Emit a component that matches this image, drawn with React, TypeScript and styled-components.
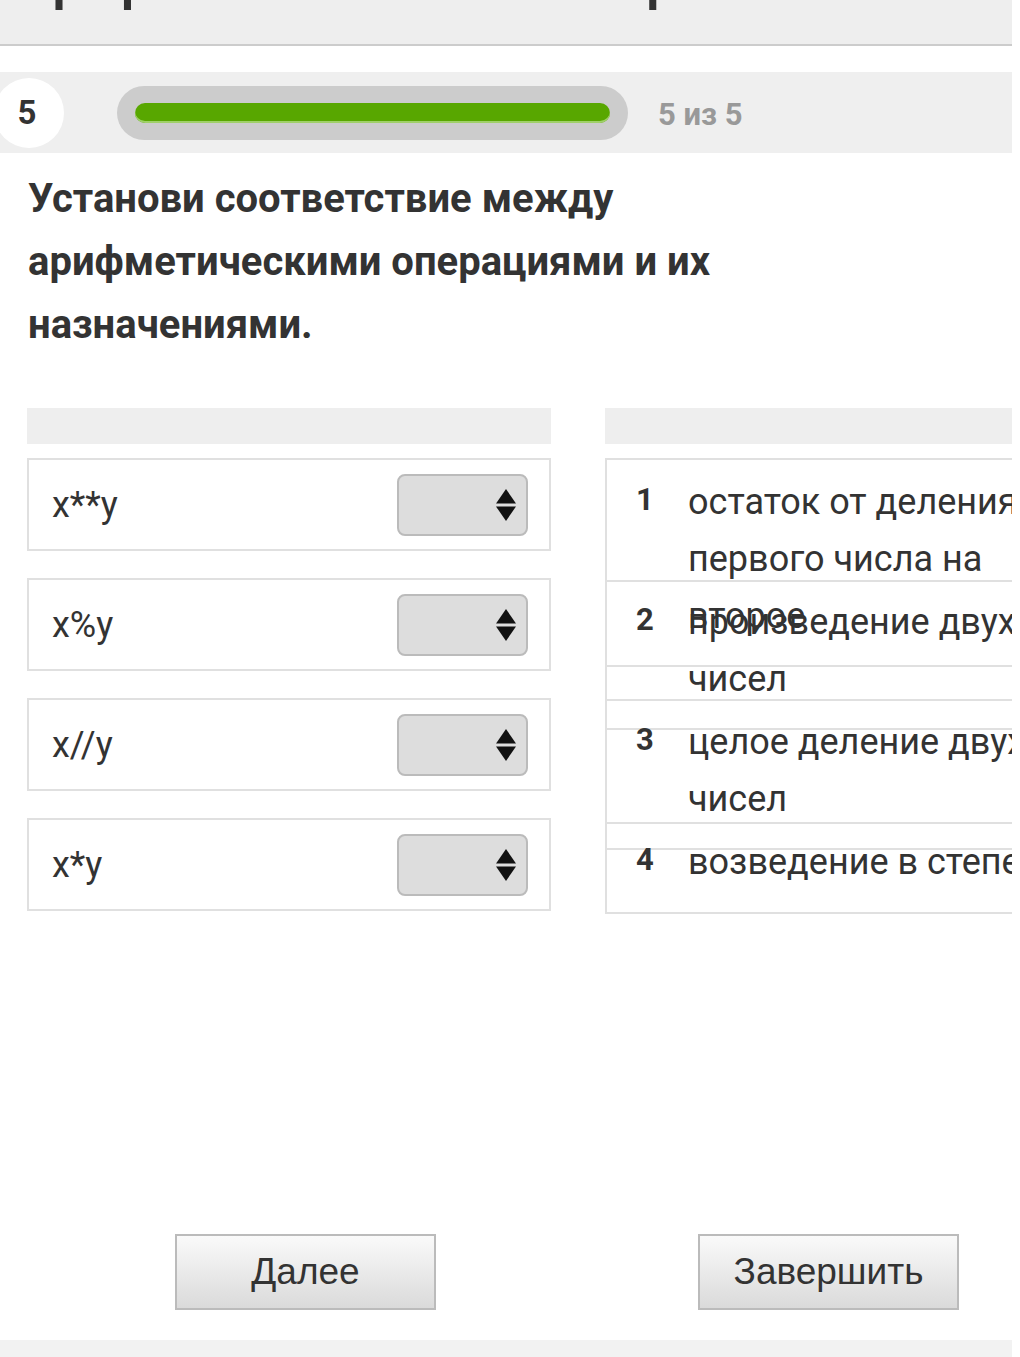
import React from "react";
import styled, { createGlobalStyle } from "styled-components";

const GlobalStyle = createGlobalStyle`
  html, body {
    margin: 0;
    padding: 0;
    background: #ffffff;
    overflow: hidden;
  }
  body {
    font-family: Roboto, "Noto Sans", "Liberation Sans", sans-serif;
    color: #333333;
  }
`;

const Page = styled.div`
  width: 1012px;
  height: 1357px;
  overflow: hidden;
  display: flex;
  flex-direction: column;
`;

const TopBar = styled.div`
  height: 44px;
  background: #eeeeee;
  border-bottom: 2px solid #cccccc;
  overflow: hidden;
  display: flex;
  align-items: flex-start;
  padding-left: 20px;
`;

const TopTitle = styled.div`
  font-size: 50px;
  font-weight: 700;
  line-height: 50px;
  white-space: nowrap;
  color: #333333;
  margin-top: -42px;
  word-spacing: 136px;
`;

const ProgressRow = styled.div`
  margin-top: 26px;
  height: 81px;
  background: #efefef;
  display: flex;
  align-items: center;
`;

const StepCircle = styled.div`
  width: 70px;
  height: 70px;
  margin-left: -6px;
  flex: none;
  border-radius: 50%;
  background: #ffffff;
  display: flex;
  align-items: center;
  justify-content: center;
  padding-right: 4px;
  box-sizing: border-box;
  font-size: 33px;
  font-weight: 700;
  color: #333333;
`;

const Track = styled.div`
  margin-left: 53px;
  width: 511px;
  height: 54px;
  box-sizing: border-box;
  border-radius: 27px;
  background: #cccccc;
  padding: 17px 18px;
  flex: none;
`;

const Fill = styled.div`
  height: 20px;
  border-radius: 10px;
  background: #58a700;
  box-shadow: inset 0 -2px 0 #9fd068;
`;

const Counter = styled.div`
  margin-left: 30px;
  font-size: 31px;
  font-weight: 700;
  color: #999999;
  padding-top: 4px;
`;

const Title = styled.h1`
  margin: 14px 0 0;
  padding: 0 0 0 28px;
  font-size: 40px;
  font-weight: 700;
  line-height: 63px;
  color: #333333;
  white-space: nowrap;
`;

const Matching = styled.div`
  margin-top: 52px;
  padding-left: 27px;
  display: flex;
  gap: 54px;
`;

const Column = styled.div`
  width: 524px;
  flex: none;
  display: flex;
  flex-direction: column;
`;

const ColumnHeader = styled.div`
  height: 36px;
  background: #eeeeee;
  margin-bottom: 14px;
`;

const LeftRow = styled.div`
  height: 93px;
  box-sizing: border-box;
  border: 2px solid #e0e0e0;
  margin-bottom: 27px;
  display: flex;
  align-items: center;
  justify-content: space-between;
  padding: 0 21px 0 23px;
`;

const Expr = styled.span`
  font-size: 36px;
  color: #333333;
`;

const Select = styled.div`
  width: 131px;
  height: 62px;
  box-sizing: border-box;
  border: 2px solid #bbbbbb;
  border-radius: 8px;
  background: #dddddd;
  display: flex;
  align-items: center;
  justify-content: flex-end;
  padding-right: 10px;
`;

const RightBody = styled.div`
  position: relative;
`;

const Rules = styled.div`
  position: absolute;
  left: 0;
  top: 0;
  width: 600px;
  height: 456px;
  box-sizing: border-box;
  border-left: 2px solid #e0e0e0;
`;

const Rule = styled.div<{ $top: number }>`
  position: absolute;
  left: 0;
  right: 0;
  top: ${(p) => p.$top}px;
  border-top: 2px solid #e0e0e0;
`;

const Item = styled.div`
  position: relative;
  height: 120px;
  display: flex;
  padding: 16px 0 0 31px;
  box-sizing: border-box;
`;

const ItemNum = styled.span`
  width: 52px;
  flex: none;
  font-size: 31px;
  font-weight: 700;
  line-height: 57px;
  color: #333333;
  margin-top: -3px;
`;

const ItemText = styled.span`
  font-size: 36px;
  line-height: 57px;
  color: #333333;
  white-space: nowrap;
`;

const Buttons = styled.div`
  margin-top: auto;
  margin-bottom: 30px;
  padding-left: 175px;
  display: flex;
  gap: 262px;
`;

const Button = styled.button`
  width: 261px;
  height: 76px;
  box-sizing: border-box;
  border: 2px solid #bbbbbb;
  border-radius: 0;
  background: linear-gradient(#fafafa, #dadada);
  font-family: "Liberation Sans Narrow", "Liberation Sans", Arial, sans-serif;
  font-size: 37px;
  color: #333333;
  padding: 0;
`;

const Footer = styled.div`
  height: 17px;
  background: #f2f2f2;
`;

const Arrows = () => (
  <svg width="20" height="32" viewBox="0 0 20 32">
    <polygon points="10,0 20,14.5 0,14.5" fill="#111" />
    <polygon points="0,17.5 20,17.5 10,32" fill="#111" />
  </svg>
);

const leftItems = ["x**y", "x%y", "x//y", "x*y"];
const rightItems: { n: number; lines: string[] }[] = [
  { n: 1, lines: ["остаток от деления", "первого числа на", "второе"] },
  { n: 2, lines: ["произведение двух", "чисел"] },
  { n: 3, lines: ["целое деление двух", "чисел"] },
  { n: 4, lines: ["возведение в степень"] },
];
const ruleTops = [0, 122, 207, 241, 270, 364, 390, 454];
const titleLines = [
  "Установи соответствие между",
  "арифметическими операциями и их",
  "назначениями.",
];

const Lines = ({ lines }: { lines: string[] }) => (
  <>
    {lines.map((l, i) => (
      <React.Fragment key={i}>
        {i > 0 && <br />}
        {l}
      </React.Fragment>
    ))}
  </>
);

export default function App() {
  return (
    <>
      <GlobalStyle />
      <Page>
        <TopBar>
          <TopTitle>Арифметические выражения</TopTitle>
        </TopBar>
        <ProgressRow>
          <StepCircle>5</StepCircle>
          <Track>
            <Fill />
          </Track>
          <Counter>5 из 5</Counter>
        </ProgressRow>
        <Title>
          <Lines lines={titleLines} />
        </Title>
        <Matching>
          <Column>
            <ColumnHeader />
            {leftItems.map((e) => (
              <LeftRow key={e}>
                <Expr>{e}</Expr>
                <Select>
                  <Arrows />
                </Select>
              </LeftRow>
            ))}
          </Column>
          <Column>
            <ColumnHeader />
            <RightBody>
              <Rules>
                {ruleTops.map((t) => (
                  <Rule key={t} $top={t} />
                ))}
              </Rules>
              {rightItems.map((it) => (
                <Item key={it.n}>
                  <ItemNum>{it.n}</ItemNum>
                  <ItemText>
                    <Lines lines={it.lines} />
                  </ItemText>
                </Item>
              ))}
            </RightBody>
          </Column>
        </Matching>
        <Buttons>
          <Button>Далее</Button>
          <Button>Завершить</Button>
        </Buttons>
        <Footer />
      </Page>
    </>
  );
}
